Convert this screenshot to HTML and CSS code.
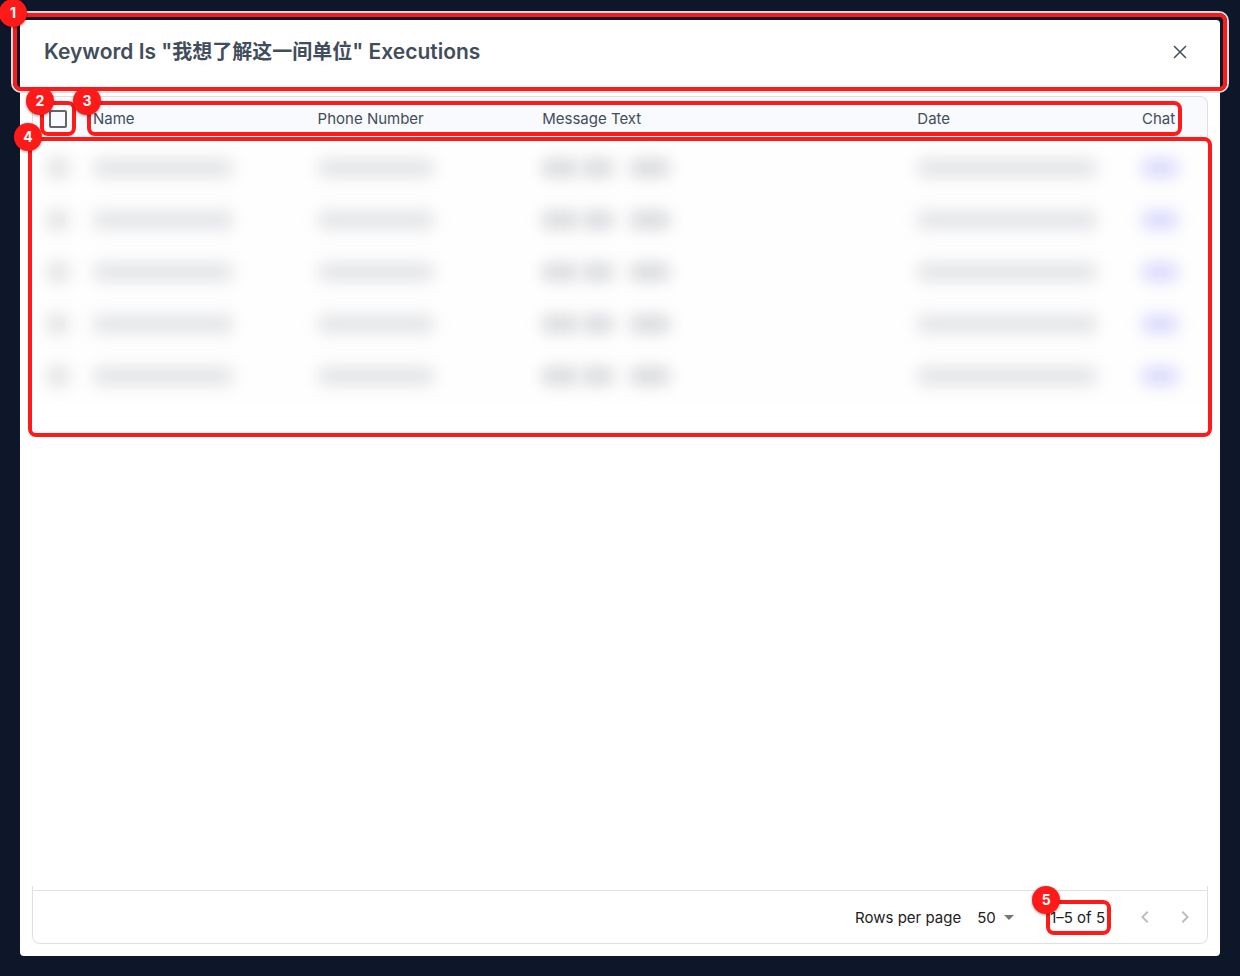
FILE: index.html
```
<!DOCTYPE html>
<html lang="en">
<head>
  <meta charset="UTF-8" />
  <meta name="viewport" content="width=device-width, initial-scale=1" />
  <title>Keyword Executions</title>
  <link rel="stylesheet" href="styles.css">
</head>
<body>

  <div class="dialog" role="dialog" aria-labelledby="dialogTitle">
    <header class="dialog-header">
      <h1 id="dialogTitle">Keyword Is "<span class="keyword" lang="zh-CN">我想了解这一间单位</span>" Executions</h1>
      <button class="close" type="button" aria-label="Close">
        <svg width="14" height="14" viewBox="0 0 14 14"><path d="M1 1L13 13M13 1L1 13"/></svg>
      </button>
      <div class="callout callout-header"><span class="badge">1</span></div>
    </header>

    <main class="grid">
      <table class="executions">
        <colgroup>
          <col class="col-check"><col class="col-name"><col class="col-phone">
          <col class="col-message"><col class="col-date"><col class="col-chat">
        </colgroup>
        <thead>
          <tr>
            <th class="check"><input type="checkbox" aria-label="Select all rows"></th>
            <th>Name</th>
            <th>Phone Number</th>
            <th>Message Text</th>
            <th>Date</th>
            <th>Chat</th>
          </tr>
        </thead>
        <tbody>
          <tr>
            <td class="check"><input type="checkbox" aria-label="Select row"></td>
            <td><span class="bar bar-name"></span></td>
            <td><span class="bar bar-phone"></span></td>
            <td><span class="words"><span class="bar"></span><span class="bar"></span><span class="bar"></span></span></td>
            <td><span class="bar bar-date"></span></td>
            <td><a class="bar bar-chat" href="#" aria-label="Chat"></a></td>
          </tr>
          <tr>
            <td class="check"><input type="checkbox" aria-label="Select row"></td>
            <td><span class="bar bar-name"></span></td>
            <td><span class="bar bar-phone"></span></td>
            <td><span class="words"><span class="bar"></span><span class="bar"></span><span class="bar"></span></span></td>
            <td><span class="bar bar-date"></span></td>
            <td><a class="bar bar-chat" href="#" aria-label="Chat"></a></td>
          </tr>
          <tr>
            <td class="check"><input type="checkbox" aria-label="Select row"></td>
            <td><span class="bar bar-name"></span></td>
            <td><span class="bar bar-phone"></span></td>
            <td><span class="words"><span class="bar"></span><span class="bar"></span><span class="bar"></span></span></td>
            <td><span class="bar bar-date"></span></td>
            <td><a class="bar bar-chat" href="#" aria-label="Chat"></a></td>
          </tr>
          <tr>
            <td class="check"><input type="checkbox" aria-label="Select row"></td>
            <td><span class="bar bar-name"></span></td>
            <td><span class="bar bar-phone"></span></td>
            <td><span class="words"><span class="bar"></span><span class="bar"></span><span class="bar"></span></span></td>
            <td><span class="bar bar-date"></span></td>
            <td><a class="bar bar-chat" href="#" aria-label="Chat"></a></td>
          </tr>
          <tr>
            <td class="check"><input type="checkbox" aria-label="Select row"></td>
            <td><span class="bar bar-name"></span></td>
            <td><span class="bar bar-phone"></span></td>
            <td><span class="words"><span class="bar"></span><span class="bar"></span><span class="bar"></span></span></td>
            <td><span class="bar bar-date"></span></td>
            <td><a class="bar bar-chat" href="#" aria-label="Chat"></a></td>
          </tr>
        </tbody>
      </table>

      <div class="callout callout-check"><span class="badge">2</span></div>
      <div class="callout callout-columns"><span class="badge">3</span></div>
      <div class="callout callout-rows"><span class="badge">4</span></div>

      <footer class="grid-footer">
        <div class="pagination">
          <label for="pageSize">Rows per page</label>
          <div class="page-size">
            <select id="pageSize">
              <option>50</option>
            </select>
            <svg width="10" height="5" viewBox="0 0 10 5"><path d="M0 0h10L5 5z"/></svg>
          </div>
          <div class="page-count">
            1–5 of 5
            <div class="callout callout-count"><span class="badge">5</span></div>
          </div>
          <div class="page-buttons">
            <button type="button" aria-label="Previous page" disabled>
              <svg width="24" height="24" viewBox="0 0 24 24"><path d="M15.41 7.41 14 6l-6 6 6 6 1.41-1.41L10.83 12z"/></svg>
            </button>
            <button type="button" aria-label="Next page" disabled>
              <svg width="24" height="24" viewBox="0 0 24 24"><path d="M10 6 8.59 7.41 13.17 12l-4.58 4.59L10 18l6-6z"/></svg>
            </button>
          </div>
        </div>
      </footer>
    </main>
  </div>

</body>
</html>
```
FILE: styles.css
```
* {
  box-sizing: border-box;
}
body {
  margin: 0;
  padding: 20px;
  min-height: 100vh;
  display: flex;
  background-color: #0e172a;
  font-family: Inter, "Noto Sans CJK SC", sans-serif;
  font-size: 15px;
  color: #212121;
}
button {
  padding: 0;
  border: none;
  background: none;
  cursor: pointer;
}

.dialog {
  flex: 1;
  display: flex;
  flex-direction: column;
  background-color: #fff;
  border-radius: 4px;
}
.dialog-header {
  position: relative;
  display: flex;
  justify-content: space-between;
  align-items: center;
  height: 64px;
  padding: 0 24px;
}
.dialog-header h1 {
  margin: 0;
  font-size: 21px;
  font-weight: 600;
  line-height: 28px;
  color: #414d5b;
}
.keyword {
  font-size: 20px;
}
.close {
  display: flex;
  align-items: center;
  justify-content: center;
  width: 32px;
  height: 32px;
}
.close path {
  fill: none;
  stroke: #414d5b;
  stroke-width: 1.5;
}

.grid {
  position: relative;
  flex: 1;
  display: flex;
  flex-direction: column;
  margin: 12px;
}
.executions {
  width: 100%;
  table-layout: fixed;
  border-collapse: separate;
  border-spacing: 0;
}
.col-check {
  width: 51px;
}
.col-name,
.col-phone,
.col-date {
  width: 19.1%;
}
.col-message {
  width: 31.9%;
}
th,
th.check {
  height: 46px;
  padding: 0 10px 2px;
  border-top: 1px solid #e0e0e0;
  background-color: #f8fafd;
  font-weight: 400;
  text-align: left;
  color: #414d5b;
}
th:first-child {
  border-left: 1px solid #e0e0e0;
  border-top-left-radius: 8px;
}
th:last-child {
  border-right: 1px solid #e0e0e0;
  border-top-right-radius: 8px;
}
td {
  height: 52px;
  padding: 0 10px;
  background-color: #fefefe;
}
.check input {
  appearance: none;
  display: block;
  width: 18px;
  height: 18px;
  margin: 0 auto;
  border: 2px solid #666;
  border-radius: 2px;
}

/* obscured rows */
td.check input {
  background-color: #ccc;
  filter: blur(8px);
  opacity: 0.4;
}
.bar {
  display: block;
  height: 18px;
  border-radius: 6px;
  background-color: #e2e3e6;
  filter: blur(8px);
}
.bar-name {
  width: 140px;
}
.bar-phone {
  width: 116px;
}
.bar-date {
  width: 180px;
}
.bar-chat {
  width: 36px;
  background-color: #d8d7fc;
}
.words {
  display: grid;
  grid-template-columns: 36px 32px 40px;
  gap: 4px;
}
.words .bar {
  background-color: #d8d9dc;
}
.words .bar:last-child {
  margin-left: 12px;
  margin-right: -12px;
}

.grid-footer {
  margin-top: auto;
  padding-top: 4px;
  border: 1px solid #e0e0e0;
  border-top: none;
  border-radius: 0 0 8px 8px;
}
.pagination {
  display: flex;
  justify-content: flex-end;
  align-items: center;
  height: 53px;
  padding-right: 2px;
  border-top: 1px solid #e0e0e0;
}
.page-size {
  display: flex;
  align-items: center;
  gap: 8px;
  margin: 0 36px 0 16px;
}
.page-size select {
  appearance: none;
  padding: 0;
  border: none;
  background: none;
  font: inherit;
  color: inherit;
}
.page-size path {
  fill: #757575;
}
.page-count {
  position: relative;
}
.page-buttons {
  display: flex;
  margin-left: 20px;
}
.page-buttons button {
  display: flex;
  align-items: center;
  justify-content: center;
  width: 40px;
  height: 40px;
}
.page-buttons svg {
  fill: #bdbdbd;
}

/* numbered callouts */
.callout {
  position: absolute;
  border: 4px solid #ff1a1a;
  border-radius: 8px;
  pointer-events: none;
}
.badge {
  position: absolute;
  top: -18px;
  left: -18px;
  width: 28px;
  height: 28px;
  border-radius: 50%;
  background-color: #ff1a1a;
  box-shadow: 0 1px 3px rgba(0, 0, 0, 0.4);
  font-size: 14px;
  font-weight: 700;
  line-height: 28px;
  text-align: center;
  color: #fff;
}
.callout-header {
  inset: -7px;
  box-shadow: 0 0 0 2px #dcdde1;
}
.callout-check {
  top: 5px;
  left: 8px;
  width: 36px;
  height: 35px;
}
.callout-columns {
  top: 5px;
  left: 55px;
  right: 26px;
  height: 35px;
}
.callout-rows {
  top: 41px;
  left: -4px;
  right: -4px;
  height: 300px;
}
.callout-count {
  inset: -8px -6px -8px -4px;
}
```
